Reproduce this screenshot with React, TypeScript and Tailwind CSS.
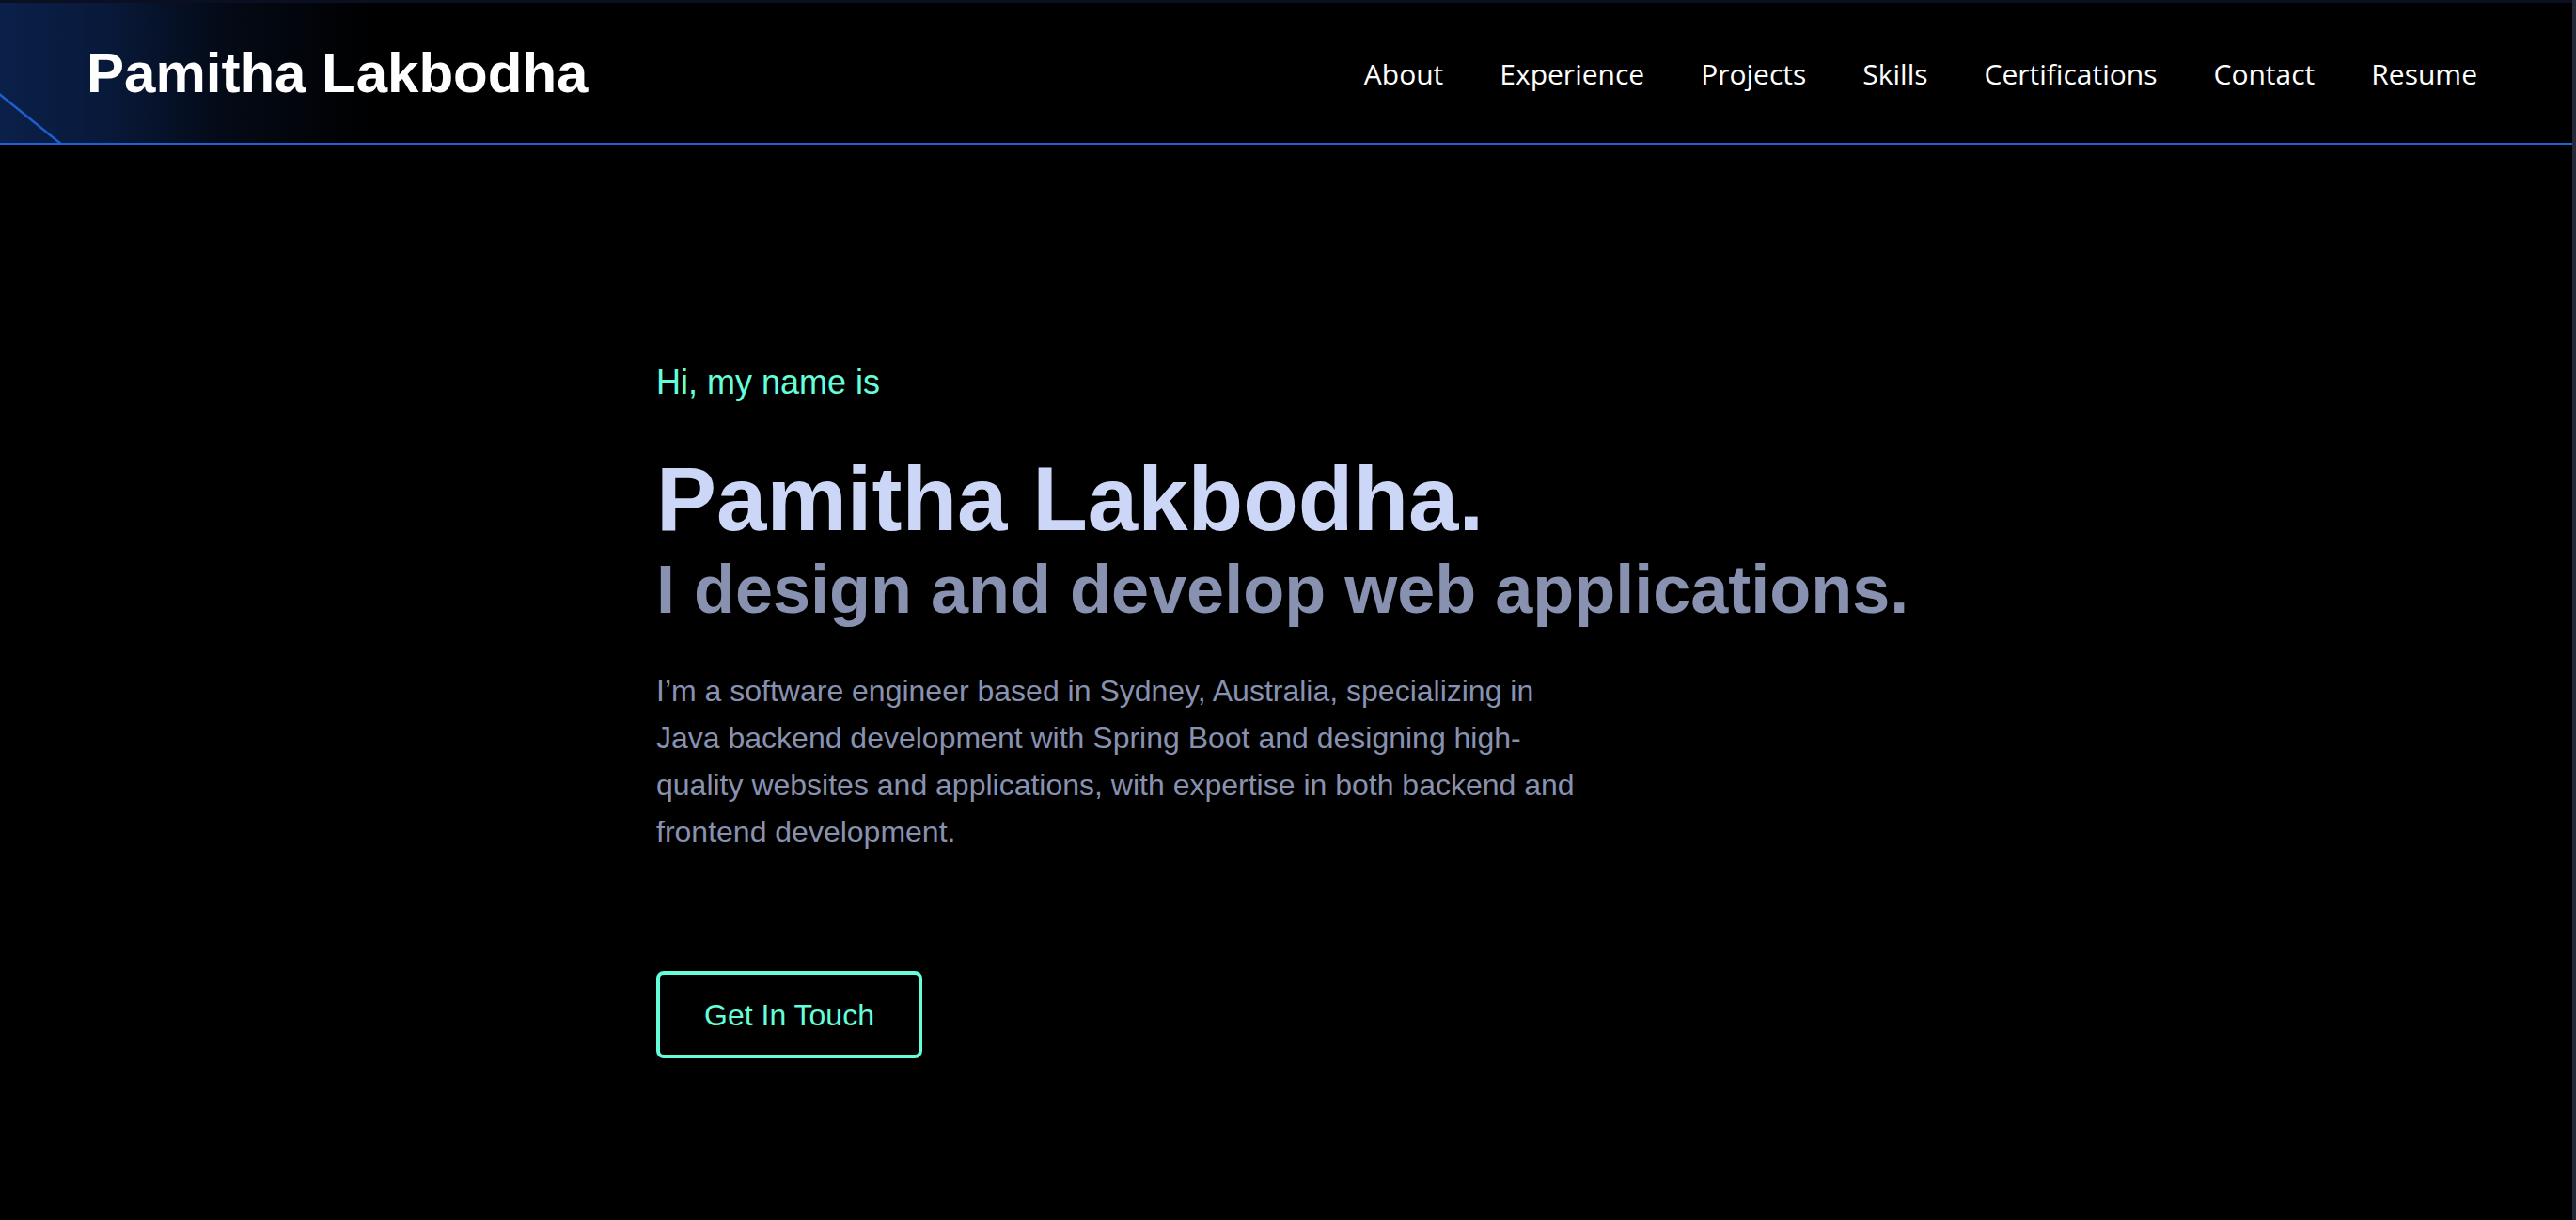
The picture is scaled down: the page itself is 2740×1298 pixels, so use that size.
import React from "react";

const navItems = ["About", "Experience", "Projects", "Skills", "Certifications", "Contact", "Resume"];

export default function App() {
  return (
    <div className="min-h-[1298px] w-full bg-black border-r-4 border-[#252a3a] overflow-hidden">
      <header className="relative w-full">
        <div className="h-[3px] w-full bg-[#0a1022]" />
        <div className="relative h-[149px] border-b-[2px] border-[#1d63d8] box-content">
          <div className="absolute inset-y-0 left-0 w-[400px] bg-[linear-gradient(90deg,#0b2049_0%,#08193a_28%,#040a16_60%,#000000_100%)]" />
          <svg className="absolute left-0 top-0" width="80" height="149" viewBox="0 0 80 149">
            <line x1="-2" y1="96" x2="66" y2="151" stroke="#1d5fd0" strokeWidth="2.5" />
          </svg>
          <div className="relative flex h-full items-center justify-between pl-[92px] pr-[101px]">
            <div className="text-[60px] font-bold leading-none text-white font-['Liberation_Sans',Arial,sans-serif]">
              Pamitha Lakbodha
            </div>
            <nav className="flex items-center gap-[60px] pt-[2px]">
              {navItems.map((n) => (
                <a key={n} className="text-[30px] leading-none text-white font-['Open_Sans','Noto_Sans',sans-serif]">
                  {n}
                </a>
              ))}
            </nav>
          </div>
        </div>
      </header>

      <main className="mx-auto w-[1340px] pt-[235px] font-['Liberation_Sans',Arial,sans-serif]">
        <p className="text-[36px] leading-[36px] text-[#64ffda]">Hi, my name is</p>
        <h1 className="mt-[58px] text-[96px] font-bold leading-[96px] text-[#ccd6f6]">Pamitha Lakbodha.</h1>
        <h2 className="mt-[12px] text-[72px] font-bold leading-[72px] text-[#8892b0]">
          I design and develop web applications.
        </h2>
        <p className="mt-[47px] w-[995px] text-[32px] leading-[50px] text-[#8892b0]">
          I’m a software engineer based in Sydney, Australia, specializing in Java backend development with Spring Boot and designing high-quality websites and applications, with expertise in both backend and frontend development.
        </p>
        <button className="mt-[123px] flex h-[93px] w-[283px] items-center justify-center rounded-[8px] border-[4px] border-[#64ffda] bg-transparent text-[32px] leading-none text-[#64ffda]">
          Get In Touch
        </button>
      </main>
    </div>
  );
}
